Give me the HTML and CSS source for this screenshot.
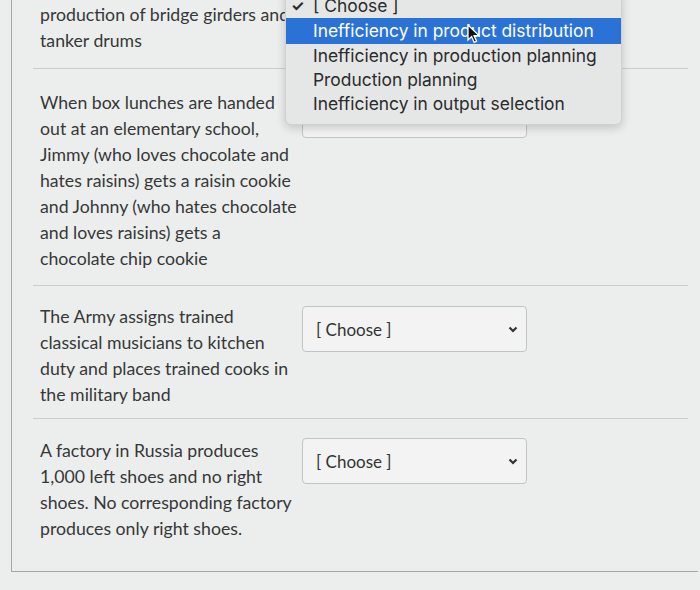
FILE: index.html
```html
<!DOCTYPE html>
<html lang="en">
<head>
    <meta charset="UTF-8">
    <meta name="viewport" content="width=device-width, initial-scale=1.0">
    <title>Matching question</title>
    <link rel="stylesheet" href="styles.css">
</head>
<body>
    <div class="card">
        <div class="answer first">
            <div class="answer-text">
                production of bridge girders and<br>
                tanker drums
            </div>
        </div>

        <div class="answer second">
            <div class="answer-text">
                When box lunches are handed<br>
                out at an elementary school,<br>
                Jimmy (who loves chocolate and<br>
                hates raisins) gets a raisin cookie<br>
                and Johnny (who hates chocolate<br>
                and loves raisins) gets a<br>
                chocolate chip cookie
            </div>
            <div class="select">
                <span>[ Choose ]</span>
                <svg class="chevron" width="10" height="7" viewBox="0 0 10 7"><polyline points="1.5,1.5 5,5 8.5,1.5" /></svg>
            </div>
        </div>

        <div class="answer third">
            <div class="answer-text">
                The Army assigns trained<br>
                classical musicians to kitchen<br>
                duty and places trained cooks in<br>
                the military band
            </div>
            <div class="select">
                <span>[ Choose ]</span>
                <svg class="chevron" width="10" height="7" viewBox="0 0 10 7"><polyline points="1.5,1.5 5,5 8.5,1.5" /></svg>
            </div>
        </div>

        <div class="answer last">
            <div class="answer-text">
                A factory in Russia produces<br>
                1,000 left shoes and no right<br>
                shoes. No corresponding factory<br>
                produces only right shoes.
            </div>
            <div class="select">
                <span>[ Choose ]</span>
                <svg class="chevron" width="10" height="7" viewBox="0 0 10 7"><polyline points="1.5,1.5 5,5 8.5,1.5" /></svg>
            </div>
        </div>
    </div>

    <!-- open native dropdown of the first select -->
    <ul class="menu">
        <li class="checked"><span class="check">✓</span>[ Choose ]</li>
        <li class="active">Inefficiency in product distribution</li>
        <li>Inefficiency in production planning</li>
        <li>Production planning</li>
        <li>Inefficiency in output selection</li>
    </ul>

    <svg class="cursor" width="13" height="20" viewBox="0 0 13 20">
        <path d="M1 1 L1 16 L4.6 12.6 L7.2 18.4 L9.6 17.3 L7 11.6 L12 11.6 Z" />
    </svg>
</body>
</html>
```

FILE: styles.css
```css
body {
    margin: 0;
    background: #eceeed;
    font-family: Lato, "Open Sans", sans-serif;
    color: #363838;
    height: 590px;
    overflow: hidden;
}
.card {
    margin-left: 11px;
    margin-right: 2px;
    padding: 0 10px 0 21px;
    border-left: 1px solid #a3a7a7;
    border-bottom: 1px solid #a3a7a7;
}
.answer {
    display: flex;
    gap: 10px;
    padding: 18px 0 10px 7px;
    border-top: 1px solid #c9cdcc;
}
.answer.first {
    padding-top: 2px;
    padding-bottom: 14px;
    border-top: none;
}
.answer.second {
    padding-top: 21px;
    padding-bottom: 13px;
}
.answer.last {
    padding-top: 19px;
    padding-bottom: 29px;
}
.answer-text {
    width: 252px;
    font-size: 17.7px;
    line-height: 26px;
    white-space: nowrap;
    flex-shrink: 0;
}
.select {
    margin-top: 2px;
    width: 225px;
    height: 46px;
    box-sizing: border-box;
    padding: 0 8px 0 13px;
    display: flex;
    align-items: center;
    justify-content: space-between;
    background: #f2f3f2;
    border: 1px solid #bfc4c6;
    border-radius: 4px;
    font-size: 17px;
    color: #333;
}
.answer.last .select {
    margin-top: 0;
}
.chevron polyline {
    fill: none;
    stroke: #333;
    stroke-width: 2.2;
}

/* dropdown overlay */
.menu {
    position: absolute;
    left: 285px;
    top: -12px;
    width: 335px;
    margin: 0;
    padding: 5px 0 8px;
    list-style: none;
    background: #e5e6e6;
    border: 1px solid #cfd1d1;
    border-radius: 6px;
    box-shadow: 0 3px 10px rgba(0,0,0,0.18);
    font-family: Inter, "Open Sans", sans-serif;
    font-size: 17.4px;
    color: #2b2b2b;
}
.menu li {
    position: relative;
    height: 24px;
    line-height: 24px;
    padding-left: 27px;
    white-space: nowrap;
}
.menu .check {
    position: absolute;
    left: 5px;
    font-size: 15px;
    font-weight: bold;
}
.menu .active {
    height: 26px;
    line-height: 26px;
    background: #2b72d7;
    color: #fff;
}
.cursor {
    position: absolute;
    left: 467px;
    top: 24px;
}
.cursor path {
    fill: #111;
    stroke: #fff;
    stroke-width: 1.3;
}
```
